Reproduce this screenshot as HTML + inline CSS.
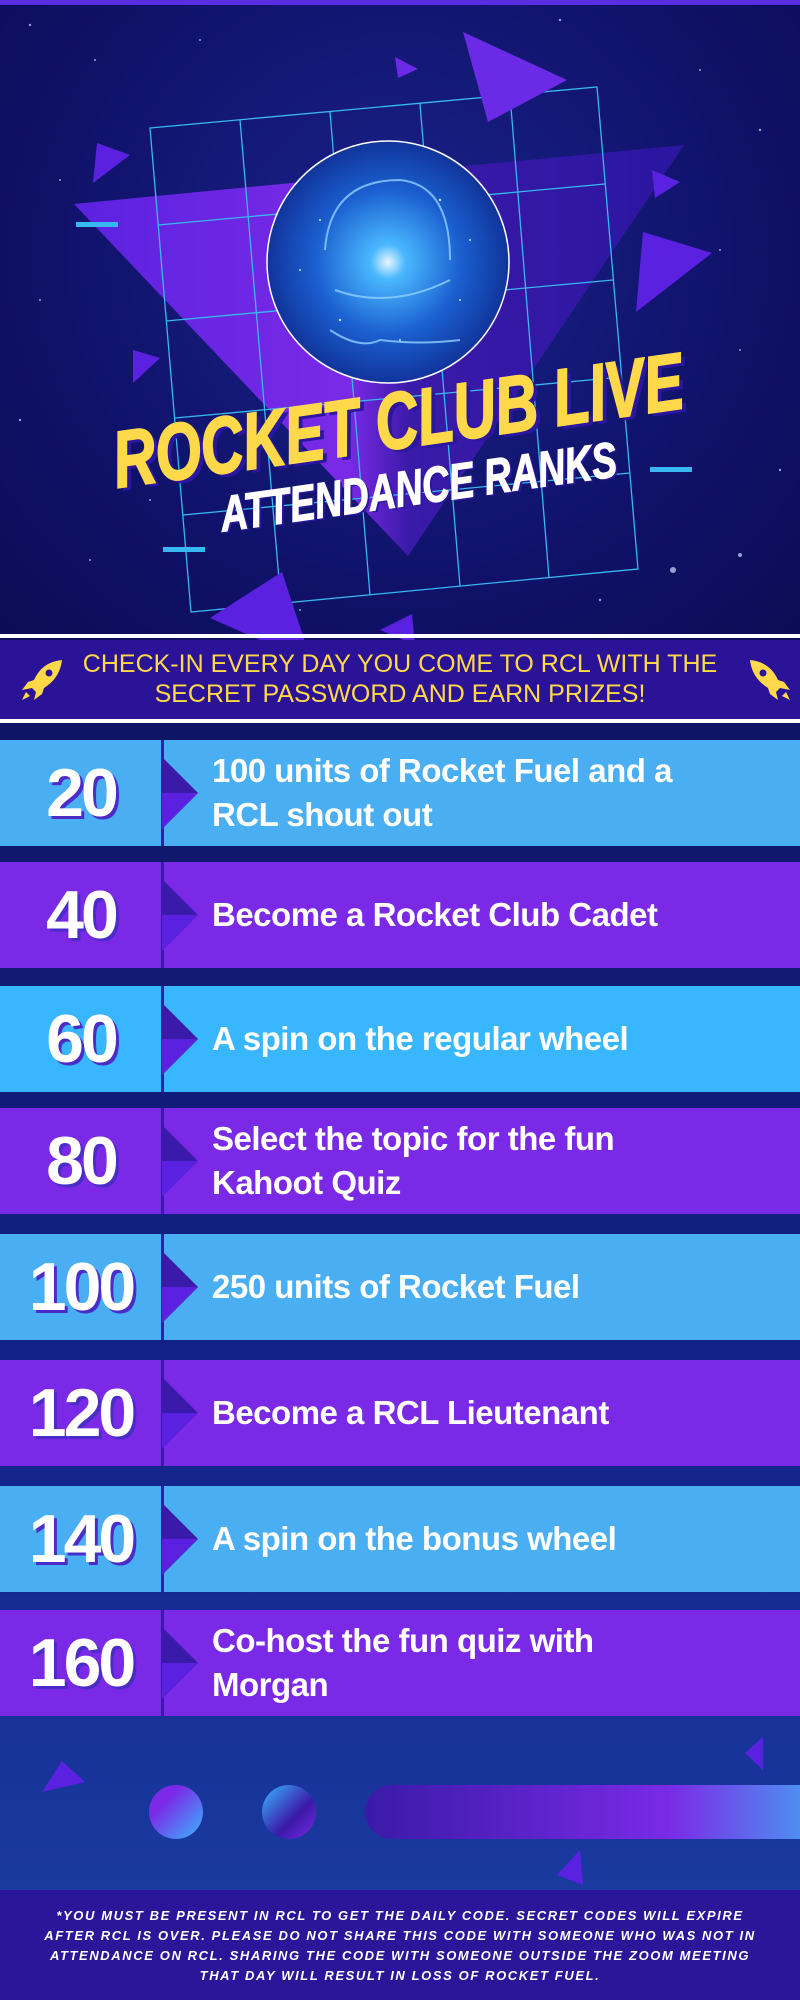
<!DOCTYPE html>
<html><head><meta charset="utf-8"><style>
*{margin:0;padding:0;box-sizing:border-box}
body{width:800px;height:2000px;position:relative;overflow:hidden;font-family:"Liberation Sans",sans-serif;background:#0f1470}
.hdr{position:absolute;left:0;top:0;width:800px;height:640px;background:radial-gradient(ellipse at 50% 40%,#1a238a 0%,#10126a 60%,#0b0c55 100%)}
.topline{position:absolute;left:0;top:0;width:800px;height:5px;background:#5a2ee0}
.mid{position:absolute;left:0;top:723px;width:800px;height:1170px;background:linear-gradient(#0e1566 0%,#13238a 60%,#1a3aa0 100%)}
.wl{position:absolute;left:0;width:800px;height:4px;background:#fff}
.banner{position:absolute;left:0;top:640px;width:800px;height:79px;background:#2a1396;color:#ffd94a;font-family:"Liberation Sans",sans-serif;font-size:25px;line-height:30px;text-align:center;padding-top:9px}
.row{position:absolute;left:0;width:800px;height:106px}
.row .num{position:absolute;left:0;top:0;width:162px;height:106px;text-align:center;font-weight:bold;font-size:68px;line-height:106px;color:#fff;text-shadow:3px 3px 0 #4a2cc8;letter-spacing:-3px}
.row .div{position:absolute;left:161px;top:0;width:3px;height:106px;background:#3a1aa8}
.row .txt{position:absolute;left:212px;top:0;width:580px;height:106px;display:flex;align-items:center;color:#fff;font-weight:bold;font-size:33px;line-height:44px;letter-spacing:-0.5px}
.row svg{position:absolute;left:162px;top:17px}
.b1{background:#4aaef2}.b2{background:#38b6ff}.p{background:#7a2ae6}
.foot{position:absolute;left:0;top:1890px;width:800px;height:110px;background:#2b1599;color:#fff;font-style:italic;font-weight:bold;font-size:13px;letter-spacing:1.6px;line-height:20px;text-align:center;padding:16px 30px 0}
</style></head><body>
<div class="hdr">
<svg width="800" height="640" style="position:absolute;left:0;top:0">
<defs>
<linearGradient id="tg" x1="0" x2="1"><stop offset="0" stop-color="#5b22e0"/><stop offset=".45" stop-color="#7a2ae6"/><stop offset=".55" stop-color="#3a1aa8"/><stop offset="1" stop-color="#2a16a0"/></linearGradient>
<radialGradient id="cg" cx=".5" cy=".5" r=".6"><stop offset="0" stop-color="#e8f6ff"/><stop offset=".12" stop-color="#4ab8ff"/><stop offset=".5" stop-color="#1b5fd0"/><stop offset="1" stop-color="#0b1f80"/></radialGradient>
</defs>
<g fill="#cfe0ff" opacity=".7">
<circle cx="30" cy="25" r="1.2"/><circle cx="95" cy="60" r="1"/><circle cx="200" cy="40" r="1"/><circle cx="560" cy="20" r="1.2"/><circle cx="700" cy="70" r="1"/><circle cx="760" cy="130" r="1.2"/><circle cx="40" cy="300" r="1"/><circle cx="20" cy="420" r="1.2"/><circle cx="740" cy="350" r="1"/><circle cx="780" cy="470" r="1.2"/><circle cx="673" cy="570" r="3"/><circle cx="740" cy="555" r="2"/><circle cx="90" cy="560" r="1"/><circle cx="600" cy="600" r="1.2"/><circle cx="300" cy="610" r="1"/><circle cx="150" cy="500" r="1"/><circle cx="720" cy="250" r="1"/><circle cx="60" cy="180" r="1"/>
</g>
<polygon points="74,204 684,145 408,556" fill="url(#tg)"/>
<g stroke="#38b8f0" stroke-width="1.3" fill="none">
<polygon points="150,128 597,87 638,569 191,612"/>
<line x1="240" y1="120" x2="281" y2="603"/><line x1="330" y1="112" x2="370" y2="595"/><line x1="420" y1="104" x2="460" y2="586"/><line x1="510" y1="95" x2="549" y2="578"/>
<line x1="158" y1="225" x2="605" y2="184"/><line x1="166" y1="321" x2="613" y2="280"/><line x1="175" y1="418" x2="622" y2="377"/><line x1="183" y1="515" x2="630" y2="473"/>
</g>
<polygon points="463,32 567,80 488,122" fill="#6a2ae6"/><polygon points="395,57 418,69 398,78" fill="#6a2ae6"/>
<polygon points="97,143 130,155 93,183" fill="#5a22e0"/><polygon points="643,232 712,253 636,312" fill="#5a22e0"/>
<polygon points="133,350 160,358 133,383" fill="#5a22e0"/><polygon points="210,618 282,572 312,663" fill="#5a22e0"/>
<polygon points="380,630 412,614 415,645" fill="#5a22e0"/><polygon points="652,170 680,182 655,198" fill="#5a22e0"/>
<rect x="76" y="222" width="42" height="5" fill="#38b8f0"/><rect x="650" y="467" width="42" height="5" fill="#38b8f0"/><rect x="163" y="547" width="42" height="5" fill="#38b8f0"/>
<circle cx="388" cy="262" r="121" fill="url(#cg)" stroke="#fff" stroke-width="1.5"/>
<g fill="#fff" opacity=".8"><circle cx="320" cy="220" r="1"/><circle cx="440" cy="200" r="1.2"/><circle cx="460" cy="300" r="1"/><circle cx="340" cy="320" r="1.2"/><circle cx="400" cy="340" r="1"/><circle cx="300" cy="270" r="1"/><circle cx="470" cy="240" r="1"/></g>
<g stroke="#8fd0ff" stroke-width="2" fill="none" opacity=".8"><path d="M325 250 Q330 180 400 180 Q450 185 450 260"/><path d="M335 290 Q390 310 450 280"/><path d="M330 330 Q360 350 380 340 Q420 345 460 340"/></g>
<g transform="rotate(-8 398 421)"><text x="402" y="452" text-anchor="middle" font-family="Liberation Sans" font-weight="bold" font-style="italic" font-size="80" fill="#2a16a0" textLength="575" lengthAdjust="spacingAndGlyphs">ROCKET CLUB LIVE</text><text x="398" y="448" text-anchor="middle" font-family="Liberation Sans" font-weight="bold" font-style="italic" font-size="80" fill="#ffd94a" stroke="#ffd94a" stroke-width="2" textLength="575" lengthAdjust="spacingAndGlyphs">ROCKET CLUB LIVE</text></g>
<g transform="rotate(-8 418 485)"><text x="420" y="506" text-anchor="middle" font-family="Liberation Sans" font-weight="bold" font-style="italic" font-size="50" fill="#2a16a0" textLength="400" lengthAdjust="spacingAndGlyphs">ATTENDANCE RANKS</text><text x="418" y="504" text-anchor="middle" font-family="Liberation Sans" font-weight="bold" font-style="italic" font-size="50" fill="#fff" stroke="#fff" stroke-width="1.2" textLength="400" lengthAdjust="spacingAndGlyphs">ATTENDANCE RANKS</text></g>
</svg>
<div class="topline"></div>
</div>
<div class="mid"></div>
<div class="wl" style="top:634px"></div>
<div class="banner">CHECK-IN EVERY DAY YOU COME TO RCL WITH THE<br>SECRET PASSWORD AND EARN PRIZES!</div>
<div class="wl" style="top:719px"></div>
<svg width="44" height="44" viewBox="0 0 44 44" style="position:absolute;left:20px;top:658px"><path d="M42 2 Q22 4 14 22 L8 24 L2 32 L12 30 L16 34 L14 42 L22 36 L24 30 Q40 20 42 2Z" fill="#ffd94a"/><circle cx="29" cy="15" r="3.5" fill="#2a1396"/><path d="M6 34 L2 42 L10 38Z" fill="#ffd94a"/></svg>
<svg width="44" height="44" viewBox="0 0 44 44" style="position:absolute;left:748px;top:658px;transform:scaleX(-1)"><path d="M42 2 Q22 4 14 22 L8 24 L2 32 L12 30 L16 34 L14 42 L22 36 L24 30 Q40 20 42 2Z" fill="#ffd94a"/><circle cx="29" cy="15" r="3.5" fill="#2a1396"/><path d="M6 34 L2 42 L10 38Z" fill="#ffd94a"/></svg>

<div class="row b1" style="top:740px"><div class="num">20</div><div class="div"></div><svg width="38" height="72"><polygon points="0,0 36,36 0,72" fill="#3a1aa8"/><polygon points="0,36 36,36 0,72" fill="#5a22e0"/></svg><div class="txt">100 units of Rocket Fuel and a<br>RCL shout out</div></div>
<div class="row p" style="top:862px"><div class="num">40</div><div class="div"></div><svg width="38" height="72"><polygon points="0,0 36,36 0,72" fill="#3a1aa8"/><polygon points="0,36 36,36 0,72" fill="#5a22e0"/></svg><div class="txt">Become a Rocket Club Cadet</div></div>
<div class="row b2" style="top:986px"><div class="num">60</div><div class="div"></div><svg width="38" height="72"><polygon points="0,0 36,36 0,72" fill="#3a1aa8"/><polygon points="0,36 36,36 0,72" fill="#5a22e0"/></svg><div class="txt">A spin on the regular wheel</div></div>
<div class="row p" style="top:1108px"><div class="num">80</div><div class="div"></div><svg width="38" height="72"><polygon points="0,0 36,36 0,72" fill="#3a1aa8"/><polygon points="0,36 36,36 0,72" fill="#5a22e0"/></svg><div class="txt">Select the topic for the fun<br>Kahoot Quiz</div></div>
<div class="row b1" style="top:1234px"><div class="num">100</div><div class="div"></div><svg width="38" height="72"><polygon points="0,0 36,36 0,72" fill="#3a1aa8"/><polygon points="0,36 36,36 0,72" fill="#5a22e0"/></svg><div class="txt">250 units of Rocket Fuel</div></div>
<div class="row p" style="top:1360px"><div class="num">120</div><div class="div"></div><svg width="38" height="72"><polygon points="0,0 36,36 0,72" fill="#3a1aa8"/><polygon points="0,36 36,36 0,72" fill="#5a22e0"/></svg><div class="txt">Become a RCL Lieutenant</div></div>
<div class="row b1" style="top:1486px"><div class="num">140</div><div class="div"></div><svg width="38" height="72"><polygon points="0,0 36,36 0,72" fill="#3a1aa8"/><polygon points="0,36 36,36 0,72" fill="#5a22e0"/></svg><div class="txt">A spin on the bonus wheel</div></div>
<div class="row p" style="top:1610px"><div class="num">160</div><div class="div"></div><svg width="38" height="72"><polygon points="0,0 36,36 0,72" fill="#3a1aa8"/><polygon points="0,36 36,36 0,72" fill="#5a22e0"/></svg><div class="txt">Co-host the fun quiz with<br>Morgan</div></div>

<svg width="800" height="175" style="position:absolute;left:0;top:1715px">
<defs>
<linearGradient id="e1" x1="0" y1="0" x2="1" y2="1"><stop offset=".3" stop-color="#7a2ae6"/><stop offset="1" stop-color="#38b8ff"/></linearGradient>
<linearGradient id="e2" x1="0" y1="0" x2="1" y2="1"><stop offset="0" stop-color="#38b8ff"/><stop offset=".6" stop-color="#3a1aa8"/><stop offset="1" stop-color="#7a2ae6"/></linearGradient>
<linearGradient id="pl" x1="0" x2="1"><stop offset="0" stop-color="#3a1aa8"/><stop offset=".7" stop-color="#7a2ae6"/><stop offset="1" stop-color="#4f8ef0"/></linearGradient>
</defs>
<circle cx="176" cy="97" r="27" fill="url(#e1)"/><circle cx="289" cy="97" r="27" fill="url(#e2)"/>
<path d="M392 70 H800 V124 H392 A27 27 0 0 1 392 70Z" fill="url(#pl)"/>
<polygon points="62,46 85,67 42,77" fill="#5a22e0"/><polygon points="763,22 763,55 745,38" fill="#5a22e0"/><polygon points="580,135 583,170 557,160" fill="#5a22e0"/>
</svg>
<div class="foot">*YOU MUST BE PRESENT IN RCL TO GET THE DAILY CODE. SECRET CODES WILL EXPIRE AFTER RCL IS OVER. PLEASE DO NOT SHARE THIS CODE WITH SOMEONE WHO WAS NOT IN ATTENDANCE ON RCL. SHARING THE CODE WITH SOMEONE OUTSIDE THE ZOOM MEETING THAT DAY WILL RESULT IN LOSS OF ROCKET FUEL.</div>
</body></html>
